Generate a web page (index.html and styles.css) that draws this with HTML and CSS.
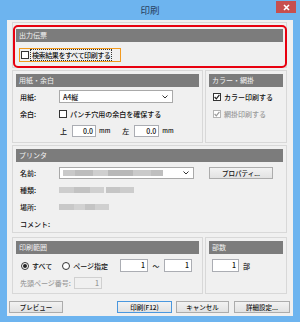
FILE: index.html
```html
<!DOCTYPE html>
<html lang="ja">
<head>
    <meta charset="UTF-8">
    <meta name="viewport" content="width=device-width, initial-scale=1.0">
    <title>印刷</title>
    <link rel="stylesheet" href="styles.css">
</head>
<body>
    <div class="window">
        <div class="titlebar">
            <span></span>
            <span class="title">印刷</span>
            <span class="close">
                <svg width="7" height="7" viewBox="0 0 7 7"><path d="M1 1L6 6M6 1L1 6" stroke="#fff" stroke-width="1.6"/></svg>
            </span>
        </div>

        <div class="client">
            <section class="group group-output">
                <div class="group-head">出力伝票</div>
                <div class="output-row">
                    <span class="orange">
                        <span class="box"></span>
                        <span class="focus-text">検索結果をすべて印刷する</span>
                    </span>
                </div>
            </section>

            <div class="pair">
                <section class="group main">
                    <div class="group-head">用紙・余白</div>
                    <div class="rows paper-rows">
                        <div class="row">
                            <span class="label">用紙:</span>
                            <span class="select paper-select">A4縦<svg class="chev" width="6" height="4" viewBox="0 0 6 4"><path d="M0.5 0.5L3 3L5.5 0.5" fill="none" stroke="#333" stroke-width="1"/></svg></span>
                        </div>
                        <div class="row">
                            <span class="label">余白:</span>
                            <span class="box"></span>
                            <span class="check-text">パンチ穴用の余白を確保する</span>
                        </div>
                        <div class="row margins">
                            <span>上</span>
                            <span class="field w24">0.0</span>
                            <span class="unit">mm</span>
                            <span class="left-label">左</span>
                            <span class="field w25">0.0</span>
                            <span class="unit">mm</span>
                        </div>
                    </div>
                </section>
                <section class="group side">
                    <div class="group-head">カラー・網掛</div>
                    <div class="rows side-rows">
                        <div class="row">
                            <span class="box checked"><svg width="6" height="6" viewBox="0 0 6 6"><path d="M0.6 3L2.3 4.8L5.4 0.8" fill="none" stroke="#222" stroke-width="1.2"/></svg></span>
                            <span class="check-text">カラー印刷する</span>
                        </div>
                        <div class="row disabled">
                            <span class="box checked"><svg width="6" height="6" viewBox="0 0 6 6"><path d="M0.6 3L2.3 4.8L5.4 0.8" fill="none" stroke="#9a9a9a" stroke-width="1.2"/></svg></span>
                            <span class="check-text">網掛印刷する</span>
                        </div>
                    </div>
                </section>
            </div>

            <section class="group printer">
                <div class="group-head">プリンタ</div>
                <div class="rows printer-rows">
                    <div class="row">
                        <span class="label">名前:</span>
                        <span class="select printer-select"><span class="blur b1"></span><svg class="chev" width="6" height="4" viewBox="0 0 6 4"><path d="M0.5 0.5L3 3L5.5 0.5" fill="none" stroke="#333" stroke-width="1"/></svg></span>
                        <span class="button prop">プロパティ...</span>
                    </div>
                    <div class="row">
                        <span class="label">種類:</span>
                        <span class="blur b2"></span>
                    </div>
                    <div class="row">
                        <span class="label">場所:</span>
                        <span class="blur b3"></span>
                    </div>
                    <div class="row">
                        <span class="label">コメント:</span>
                    </div>
                </div>
            </section>

            <div class="pair range-pair">
                <section class="group main">
                    <div class="group-head">印刷範囲</div>
                    <div class="rows range-rows">
                        <div class="row">
                            <span class="radio on"></span>
                            <span class="check-text">すべて</span>
                            <span class="radio second"></span>
                            <span class="check-text">ページ指定</span>
                            <span class="field from">1</span>
                            <span class="tilde">〜</span>
                            <span class="field to">1</span>
                        </div>
                        <div class="row disabled">
                            <span class="start-label">先頭ページ番号:</span>
                            <span class="field off">1</span>
                        </div>
                    </div>
                </section>
                <section class="group side">
                    <div class="group-head">部数</div>
                    <div class="rows range-rows">
                        <div class="row">
                            <span class="field copies">1</span>
                            <span class="unit-bu">部</span>
                        </div>
                    </div>
                </section>
            </div>

            <div class="buttons">
                <span class="button preview">プレビュー</span>
                <span class="spacer"></span>
                <span class="button default">印刷(F12)</span>
                <span class="button cancel">キャンセル</span>
                <span class="button detail">詳細設定...</span>
            </div>
        </div>
    </div>
</body>
</html>
```

FILE: styles.css
```css
body {
    margin: 0;
    font-family: "Noto Sans CJK JP", "Noto Sans", sans-serif;
    font-size: 7px;
    font-weight: 500;
    color: #111;
    background: #6db4ef;
}
.window {
    width: 300px;
    height: 322px;
    background: #6db4ef;
    display: flex;
    flex-direction: column;
}
.titlebar {
    height: 20px;
    display: grid;
    grid-template-columns: 1fr auto 1fr;
    align-items: start;
}
.title {
    font-size: 9.5px;
    font-weight: 400;
    line-height: 20px;
    color: #28405e;
}
.close {
    justify-self: end;
    width: 20px;
    height: 12px;
    margin: 1px 4px 0 0;
    background: #c74f4f;
    display: flex;
    align-items: center;
    justify-content: center;
}
.client {
    margin: 0 7px;
    height: 296px;
    box-sizing: border-box;
    padding: 2px 6px 0 5px;
    background: #f0f0f0;
    display: flex;
    flex-direction: column;
}
.group {
    position: relative;
    box-sizing: border-box;
    border: 1px solid #d8d8d8;
    padding: 3px;
}
.group-head {
    height: 13px;
    line-height: 13px;
    background: #7c7c7c;
    color: #f2f2f2;
    padding-left: 3px;
    font-size: 7px;
    font-weight: 400;
}
.group-output {
    height: 46px;
    padding-top: 6px;
}
.group-output::after {
    content: "";
    position: absolute;
    left: 0;
    top: 2px;
    right: -1px;
    bottom: -1px;
    border: 2.5px solid #e8000f;
    border-radius: 5px;
}
.output-row {
    margin-top: 6px;
    padding-left: 3px;
    display: flex;
}
.orange {
    display: flex;
    align-items: center;
    width: 102px;
    height: 14px;
    box-sizing: border-box;
    border: 1px solid #f29a1f;
    padding-left: 1px;
}
.focus-text {
    margin-left: 1px;
    border: 1px dotted #333;
    line-height: 10px;
    padding: 0 1px;
    letter-spacing: -0.4px;
}
.box {
    width: 8px;
    height: 8px;
    box-sizing: border-box;
    border: 1px solid #333;
    background: #fff;
    display: inline-flex;
    align-items: center;
    justify-content: center;
    flex: none;
}
.disabled .box {
    border-color: #b4b4b4;
}
.pair {
    display: flex;
    gap: 2px;
    margin-top: 2px;
    height: 73px;
}
.pair .main {
    width: 191px;
}
.pair .side {
    flex: 1;
}
.rows {
    display: flex;
    flex-direction: column;
}
.row {
    display: flex;
    align-items: center;
    height: 17px;
}
.label {
    width: 39px;
    flex: none;
}
.paper-rows {
    padding: 1px 0 0 4px;
}
.select {
    height: 13px;
    box-sizing: border-box;
    border: 1px solid #a9a9a9;
    background: #fff;
    display: flex;
    align-items: center;
    padding: 0 4px 0 3px;
}
.chev {
    margin-left: auto;
}
.paper-select {
    width: 114px;
}
.check-text {
    margin-left: 3px;
}
.margins {
    padding-left: 40px;
}
.field {
    height: 12px;
    box-sizing: border-box;
    border: 1px solid #abadb3;
    background: #fff;
    text-align: right;
    padding-right: 2px;
    line-height: 10px;
    font-size: 7px;
}
.w24 {
    width: 24px;
    margin-left: 5px;
}
.w25 {
    width: 25px;
    margin-left: 5px;
}
.unit {
    margin-left: 3px;
    font-size: 6px;
}
.left-label {
    margin-left: 12px;
}
.side-rows {
    padding: 1px 0 0 4px;
}
.disabled {
    color: #9a9a9a;
}
.printer {
    margin-top: 2px;
    height: 88px;
    padding-bottom: 0;
}
.printer-rows {
    padding: 2px 0 0 4px;
}
.printer-select {
    width: 135px;
    height: 12px;
}
.button {
    height: 12px;
    box-sizing: border-box;
    border: 1px solid #acacac;
    background: linear-gradient(#f2f2f2, #e2e2e2);
    display: flex;
    align-items: center;
    justify-content: center;
    font-size: 6.5px;
}
.prop {
    width: 64px;
    margin-left: 15px;
}
.blur {
    height: 6px;
    filter: blur(0.6px);
}
.b1 {
    width: 100px;
    background: linear-gradient(90deg, #c9c9c9 0 12%, #bdbdbd 12% 30%, #cfcfcf 30% 45%, #b8b8b8 45% 70%, #cacaca 70% 88%, #bfbfbf 88%);
}
.b2 {
    width: 75px;
    background: linear-gradient(90deg, #cdcdcd 0 20%, #c2c2c2 20% 42%, #d0d0d0 42% 60%, #f0f0f0 60% 63%, #c5c5c5 63% 82%, #cccccc 82%);
}
.b3 {
    width: 50px;
    background: linear-gradient(90deg, #c8c8c8 0 30%, #d2d2d2 30% 52%, #c4c4c4 52% 72%, #d0d0d0 72%);
}
.range-pair {
    margin-top: 4px;
    height: 57px;
}
.range-rows {
    padding: 3px 0 0 5px;
}
.radio {
    width: 8px;
    height: 8px;
    box-sizing: border-box;
    border: 1px solid #333;
    border-radius: 50%;
    background: #fff;
    display: inline-flex;
    align-items: center;
    justify-content: center;
    flex: none;
}
.radio.on::after {
    content: "";
    width: 4px;
    height: 4px;
    border-radius: 50%;
    background: #222;
}
.radio.second {
    margin-left: 10px;
}
.from {
    width: 28px;
    margin-left: 12px;
    height: 13px;
}
.to {
    width: 28px;
    height: 13px;
}
.tilde {
    width: 16px;
    text-align: center;
}
.start-label {
    margin-left: -1px;
}
.off {
    width: 28px;
    margin-left: 3px;
    background: #f0f0f0;
    border-color: #d0d0d0;
    color: #9a9a9a;
}
.copies {
    width: 27px;
    height: 13px;
}
.unit-bu {
    margin-left: 4px;
}
.range-pair .side .range-rows {
    padding-left: 3px;
}
.buttons {
    display: flex;
    margin: 7px -3px 0 -3px;
    gap: 4px;
}
.spacer {
    flex: 1;
}
.preview {
    width: 54px;
}
.default {
    width: 55px;
    border-color: #4a97de;
}
.cancel {
    width: 53px;
}
.detail {
    width: 56px;
    margin-left: 1px;
}
```
